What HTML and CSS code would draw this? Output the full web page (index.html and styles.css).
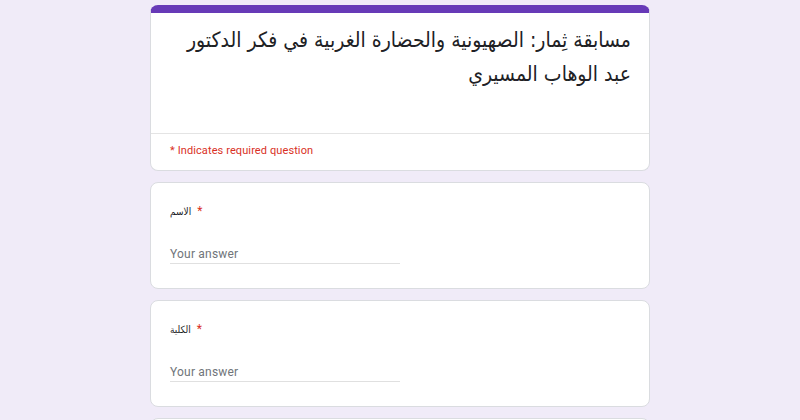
FILE: index.html
```html
<!DOCTYPE html>
<html lang="ar">
<head>
<meta charset="utf-8">
<link rel="stylesheet" href="styles.css">
</head>
<body>
<div class="page">
  <div class="card title-card">
    <div class="title-body">
      <div class="title" dir="rtl">مسابقة ثِمار: الصهيونية والحضارة الغربية في فكر الدكتور عبد الوهاب المسيري</div>
    </div>
    <div class="required-note">* Indicates required question</div>
  </div>
  <div class="card question">
    <div class="label"><span class="label-text">الاسم</span><span class="star">*</span></div>
    <div class="answer">Your answer</div>
  </div>
  <div class="card question">
    <div class="label"><span class="label-text">الكلية</span><span class="star">*</span></div>
    <div class="answer">Your answer</div>
  </div>
  <div class="card question"></div>
</div>
</body>
</html>
```
FILE: styles.css
```css
html, body {
  margin: 0;
  padding: 0;
  background: #f0ebf8;
}
.page {
  width: 500px;
  margin: 0 auto;
  padding-top: 5px;
  display: flex;
  flex-direction: column;
  gap: 11px;
}
.card {
  background: #fff;
  border: 1px solid #dadce0;
  border-radius: 8px;
  box-sizing: border-box;
}
.title-card {
  border-top: 8px solid #673ab7;
  height: 166px;
}
.title-body {
  height: 121px;
  border-bottom: 1px solid #e4e4e4;
  padding: 10px 18px 0 18px;
  box-sizing: border-box;
}
.title {
  font-family: "DejaVu Sans Condensed", "DejaVu Sans", sans-serif;
  font-stretch: condensed;
  font-size: 21px;
  line-height: 34px;
  color: #202124;
  text-align: right;
}
.required-note {
  font-family: Roboto, "Liberation Sans", sans-serif;
  font-size: 11px;
  letter-spacing: 0.1px;
  color: #d93025;
  padding: 10px 19px 0;
}
.question {
  height: 107px;
  padding: 18px 19px 0;
}
.label {
  font-family: "DejaVu Sans Condensed", "DejaVu Sans", sans-serif;
  font-size: 10px;
  color: #202124;
  display: flex;
  align-items: center;
  gap: 6px;
  height: 20px;
}
.star {
  color: #d93025;
  font-family: Roboto, sans-serif;
  font-size: 12px;
}
.answer {
  margin-top: 26px;
  width: 230px;
  font-family: Roboto, "Liberation Sans", sans-serif;
  font-size: 12px;
  color: #70757a;
  padding-bottom: 2px;
  border-bottom: 1px solid #e0e0e0;
  letter-spacing: 0.2px;
}
```
